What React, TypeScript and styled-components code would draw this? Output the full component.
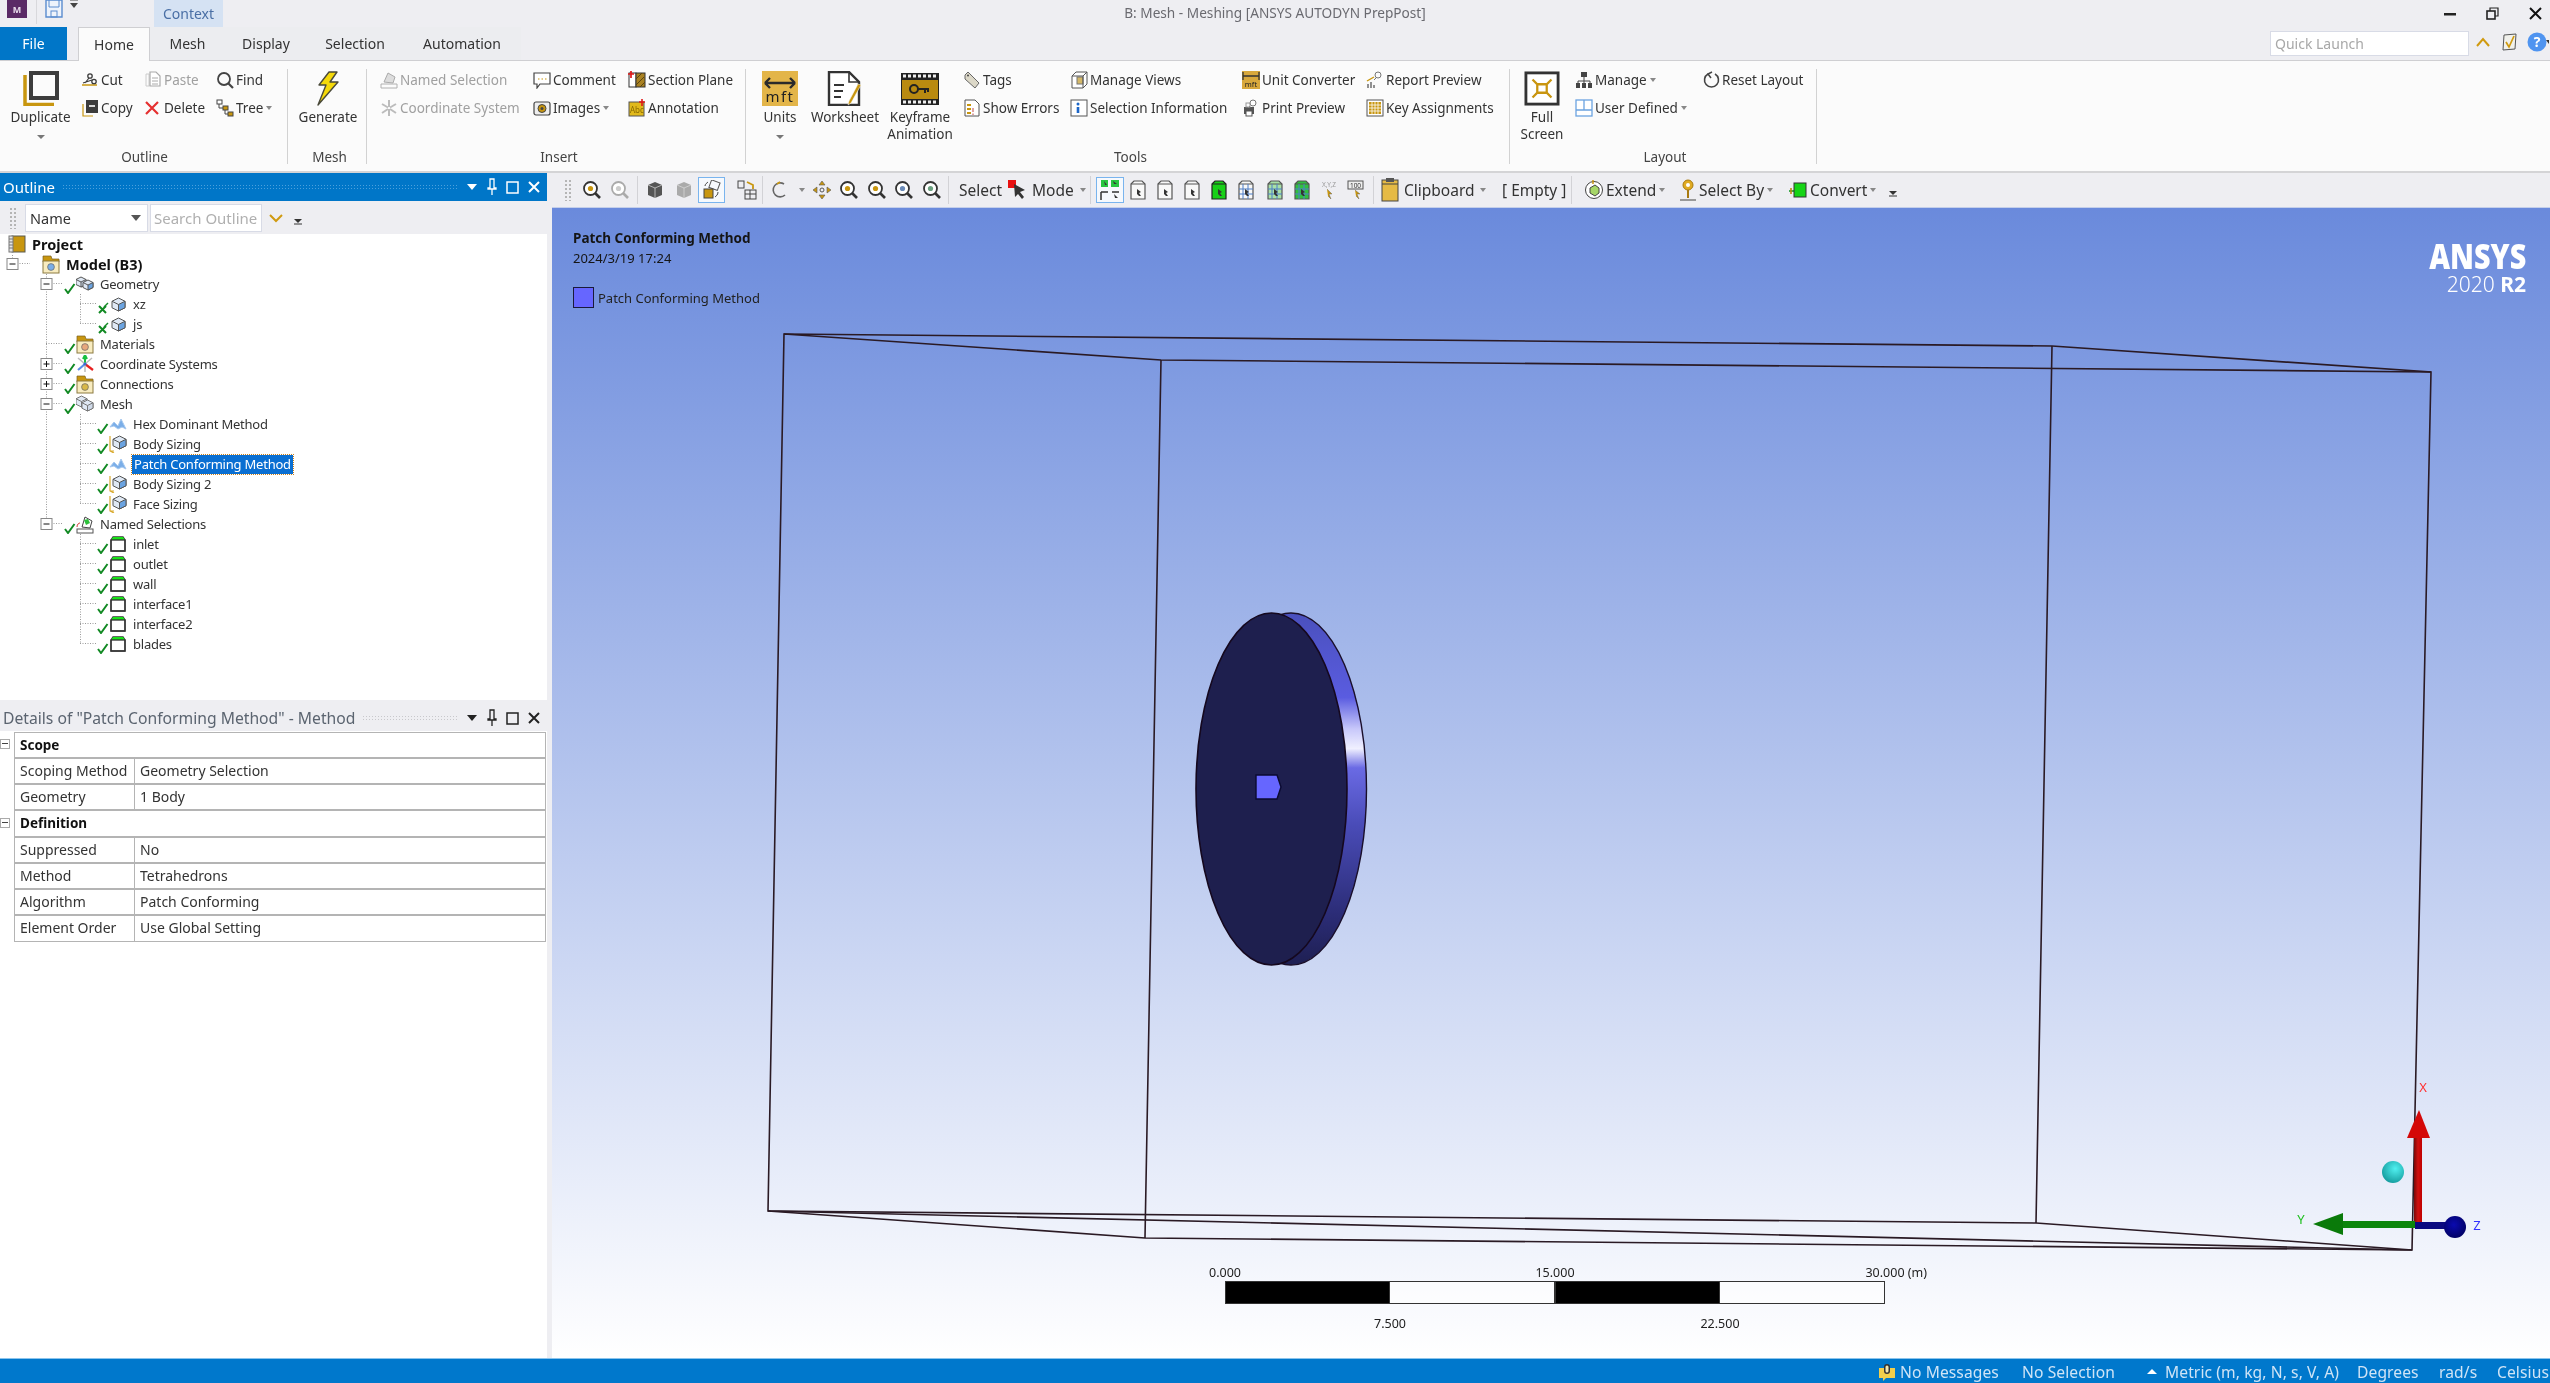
import React from "react";
import styled, { createGlobalStyle } from "styled-components";

const Global = createGlobalStyle`
  html, body { margin: 0; padding: 0; background: #eeeef2; }
  * { box-sizing: border-box; }
`;
const FONT = `"Noto Sans", "Open Sans", sans-serif`;
const GOLD = "#c8960f";
const DARK = "#3c3c3c";
const BLUE = "#6ba3e0";

const Page = styled.div`
  width: 2550px; height: 1383px; overflow: hidden; display: flex; flex-direction: column;
  font-family: ${FONT}; font-size: 13.5px; color: #333; background: #eeeef2; filter: blur(0.45px);
`;
const TitleBar = styled.div`height: 27px; display: grid; grid-template-columns: 1fr auto 1fr; align-items: start;`;
const QuickAccess = styled.div`display: flex; align-items: flex-start; height: 27px; padding-left: 7px;`;
const AppLogo = styled.div`
  width: 20px; height: 18px; background: #5a2a66; color: #e8dcec; font-size: 9px; font-weight: 700;
  display: flex; align-items: center; justify-content: center;
`;
const QuickSep = styled.div`width: 1px; height: 24px; background: #d8d8dc; margin: 0 8px 0 9px;`;
const QuickGap = styled.span`width: 6px; flex: none;`;
const ContextTab = styled.div`
  width: 69px; height: 27px; margin-left: 75px; background: #d5e2f3; color: #4a6fa5; font-size: 14px;
  display: flex; align-items: center; justify-content: center;
`;
const WindowTitle = styled.div`font-size: 13.65px; color: #6a6a70; line-height: 25px;`;
const WindowControls = styled.div`display: flex; justify-content: flex-end; align-items: center; height: 27px; gap: 30px; padding-right: 8px;`;

const TabRow = styled.div`height: 33px; display: flex; align-items: stretch; padding-right: 0;`;
const FileTab = styled.div`
  width: 67px; background: #0076c8; color: #fff; font-size: 14px; display: flex; align-items: center; justify-content: center; margin-right: 11px;
`;
const Tab = styled.div<{ $w: number; $active?: boolean }>`
  width: ${p => p.$w}px; display: flex; align-items: center; justify-content: center; font-size: 14px; color: #333;
  background: ${p => (p.$active ? "#fbfbfb" : "#ecedf0")};
  border: ${p => (p.$active ? "1px solid #cfcfd2" : "none")}; border-bottom: none; margin-bottom: ${p => (p.$active ? "-1px" : "0")};
  position: relative; z-index: 1;
`;
const TabSpacer = styled.div`flex: 1;`;
const QuickLaunch = styled.div`
  width: 199px; height: 25px; margin-top: 4px; background: #fff; border: 1px solid #d8dbe6; color: #a8a8a8; font-size: 14px;
  padding-left: 4px; line-height: 23px; margin-right: 6px;
`;
const HelpGroup = styled.div`display: flex; align-items: center; gap: 9px; width: 75px; height: 29px;`;

const Ribbon = styled.div`
  height: 113px; display: flex; padding: 8px 0 7px; background: #fbfbfb;
  border-top: 1px solid #cfcfd2; border-bottom: 2px solid #d4d4d6;
`;
const Group = styled.div<{ $w: number; $pad?: number }>`
  width: ${p => p.$w}px; display: flex; flex-direction: column; flex: none;
  border-right: 1px solid #d2d2d2;
  padding-left: ${p => p.$pad ?? 0}px;
`;
const GroupBody = styled.div`height: 81px; display: flex; align-items: flex-start;`;
const GroupLabel = styled.div<{ $shift?: number }>`
  line-height: 14px; text-align: center; color: #444; font-size: 13.5px; margin-left: ${p => p.$shift ?? 0}px;
`;
const BigBtn = styled.div<{ $w: number }>`
  width: ${p => p.$w}px; flex: none; display: flex; flex-direction: column; align-items: center; padding-top: 2px;
  line-height: 17px; text-align: center; font-size: 13.5px;
  svg { margin-bottom: 3px; }
`;
const DropCaret = styled.span`
  display: inline-block; width: 0; height: 0; border-left: 4px solid transparent; border-right: 4px solid transparent;
  border-top: 4px solid #777; margin-top: 9px;
`;
const InlineCaret = styled.span`
  display: inline-block; width: 0; height: 0; border-left: 3.5px solid transparent; border-right: 3.5px solid transparent;
  border-top: 4px solid #888; margin-left: 3px; vertical-align: 3px;
`;
const BodyGap = styled.span<{ $w: number }>`width: ${p => p.$w}px; flex: none;`;
const SmallCol = styled.div<{ $w?: number }>`
  width: ${p => (p.$w ? p.$w + "px" : "auto")}; flex: none; display: flex; flex-direction: column; gap: 6px;
`;
const SmallBtn = styled.div<{ $off?: boolean }>`
  height: 22px; display: flex; align-items: center; white-space: nowrap; font-size: 13.5px;
  color: ${p => (p.$off ? "#a0a0a0" : "#333")};
`;
const SmallIcon = styled.span`width: 20px; flex: none; display: flex; align-items: center;`;

const Main = styled.div`flex: 1; display: flex; min-height: 0;`;
const LeftPane = styled.div`width: 547px; flex: none; display: flex; flex-direction: column; background: #fff;`;
const Splitter = styled.div`width: 5px; flex: none; background: #eeeef2;`;
const RightPane = styled.div`flex: 1; display: flex; flex-direction: column; min-width: 0;`;

const PanelHead = styled.div<{ $active?: boolean }>`
  height: ${p => (p.$active ? "28px" : "26px")}; display: flex; align-items: center; padding: 0 7px 0 3px; flex: none;
  font-size: ${p => (p.$active ? "15px" : "15.7px")};
  background: ${p => (p.$active ? "#0076c8" : "#eeeef2")}; color: ${p => (p.$active ? "#fff" : "#5b6470")};
`;
const HeadDots = styled.div<{ $active?: boolean }>`
  flex: 1; height: 7px; margin: 0 8px 0 7px;
  background-image: radial-gradient(${p => (p.$active ? "#4ba0dc" : "#c8c8cc")} 0.8px, transparent 1px);
  background-size: 3px 3px;
`;
const HeadIcons = styled.div`display: flex; align-items: center; gap: 9px;`;
const OutlineTools = styled.div`
  height: 33px; flex: none; display: flex; align-items: center; background: #eeeef2; padding-left: 9px;
`;
const Grip = styled.div`
  width: 7px; height: 22px; flex: none;
  background-image: radial-gradient(#b5b5b5 0.9px, transparent 1.1px); background-size: 4px 4px;
`;
const NameSelect = styled.div`
  width: 123px; height: 28px; margin-left: 9px; background: #fff; border: 1px solid #d8dbe6; font-size: 14.5px; color: #333;
  display: flex; align-items: center; justify-content: space-between; padding: 0 5px 0 4px;
`;
const SearchBox = styled.div`
  width: 112px; height: 28px; margin: 0 6px 0 2px; background: #fff; border: 1px solid #d8dbe6; color: #b0b0b0; font-size: 15px;
  padding-left: 3px; line-height: 26px; white-space: nowrap; overflow: hidden;
`;
const ToolsGap = styled.span`width: 9px; flex: none;`;
const DropLow = styled.span`display: block; margin-top: 8px;`;
const Tree = styled.div`height: 466px; flex: none; position: relative; background: #fff; overflow: hidden;`;
const TreeLines = styled.svg`position: absolute; left: 0; top: 0;`;
const Row = styled.div<{ $pad: number }>`
  height: 20px; display: flex; align-items: center; padding-left: ${p => p.$pad}px; position: relative; white-space: nowrap;
`;
const CheckSlot = styled.span`width: 12px; height: 20px; flex: none; display: flex; align-items: flex-end;`;
const NodeIcon = styled.span`width: 18px; height: 20px; flex: none; display: flex; align-items: center; justify-content: center; margin-right: 6px;`;
const NodeLabel = styled.span<{ $bold?: boolean; $sel?: boolean }>`
  font-size: ${p => (p.$bold ? "14.5px" : "13px")}; line-height: 19px; font-weight: ${p => (p.$bold ? 700 : 400)};
  letter-spacing: ${p => (p.$bold ? "0" : "-0.22px")};
  color: ${p => (p.$bold ? "#111" : p.$sel ? "#fff" : "#333")};
  padding: 0 ${p => (p.$sel ? "2px" : "0")};
  margin-left: ${p => (p.$sel ? "-1px" : "0")};
  background: ${p => (p.$sel ? "#0a6fd2" : "transparent")};
  outline: ${p => (p.$sel ? "1px dotted #c8801c" : "none")};
`;
const TreeGap = styled.div`height: 5px; flex: none; background: #eeeef2;`;
const Details = styled.div`flex: 1; background: #fff; display: flex; flex-direction: column;`;
const Grid = styled.div`margin: 0 1px 0 0; padding-left: 0; position: relative;`;
const DetRow = styled.div`height: 26.25px; display: flex; align-items: center;`;
const DetGutter = styled.div`width: 15px; flex: none; display: flex; align-items: center;`;
const Minus = styled.span`
  width: 10px; height: 10px; border: 1px solid #aaa; background: #fff; display: block; position: relative;
  &::after { content: ""; position: absolute; left: 1px; right: 1px; top: 3px; height: 1px; background: #444; }
`;
const DetCell = styled.div<{ $w?: number; $bold?: boolean }>`
  ${p => (p.$w ? `width: ${p.$w}px; flex: none;` : "flex: 1;")}
  height: 100%; border: 1px solid #b4b4b4; margin-left: -1px; margin-bottom: -1px; padding-left: 5px; line-height: 24px;
  font-size: ${p => (p.$bold ? "13.5px" : "14px")}; color: #333; font-weight: ${p => (p.$bold ? 700 : 400)}; background: #fff;
  ${p => (p.$bold ? "color:#111;" : "")}
  &:first-of-type { margin-left: 0; }
`;

const ToolBar = styled.div`
  height: 34px; flex: none; display: flex; align-items: center; background: #eeeef2; padding-left: 12px;
  border-top: 0; font-size: 15.5px; color: #333;
`;
const Slot = styled.div<{ $w: number; $on?: boolean; $end?: boolean }>`
  width: ${p => p.$w}px; flex: none; height: 26px; display: flex; align-items: center;
  justify-content: ${p => (p.$end ? "flex-end" : "center")};
  ${p => (p.$on ? "border: 1px solid #79b4ee; background: #f6f9fd;" : "")}
`;
const TextSlot = styled.div<{ $w: number; $pad?: number }>`
  width: ${p => p.$w}px; flex: none; padding-left: ${p => p.$pad ?? 0}px; white-space: nowrap; line-height: 26px;
`;
const ToolSep = styled.div<{ $w: number }>`
  width: ${p => p.$w}px; flex: none; height: 28px; display: flex; justify-content: center;
  &::after { content: ""; width: 1px; height: 100%; background: #d2d2d6; }
`;
const BarCaret = styled.span`
  width: 0; height: 0; border-left: 3.5px solid transparent; border-right: 3.5px solid transparent; border-top: 4px solid #888;
`;
const Viewport = styled.div`
  flex: 1; position: relative; overflow: hidden; border-top: 1px solid #c4cfea;
  background: linear-gradient(180deg, #6a8adc 0%, #ffffff 100%);
`;
const Scene = styled.svg`position: absolute; left: 0; top: 0;`;
const Caption = styled.div`
  position: absolute; left: 21px; top: 20px; color: #151515; font-size: 13px; line-height: 20px;
`;
const CaptionTitle = styled.div`font-weight: 700; font-size: 13.5px;`;
const Legend = styled.div`display: flex; align-items: center; gap: 4px; margin-top: 19px; height: 21px; color: #222;`;
const Swatch = styled.span`width: 21px; height: 21px; background: #6666ff; border: 1px solid #1a1a3a;`;
const Brand = styled.div`
  position: absolute; right: 24px; top: 33px; color: #fff; display: flex; flex-direction: column; align-items: flex-end;
`;
const BrandName = styled.div`
  font-family: "Open Sans", sans-serif; font-weight: 800; font-size: 35px; line-height: 30px; transform: scaleX(0.82); transform-origin: right center;
`;
const BrandVer = styled.div`font-size: 21px; line-height: 20px; margin-top: 3px; font-weight: 300; b { font-weight: 700; }`;
const ScaleBar = styled.div`
  position: absolute; left: 673px; top: 1058px; width: 660px; display: grid; grid-template-columns: repeat(4, 165px);
  font-size: 12.5px; color: #222; line-height: 14px;
`;
const ScaleTick = styled.span<{ $col: number; $end?: boolean }>`
  grid-column: ${p => p.$col}; white-space: nowrap;
  ${p => (p.$end ? "justify-self: end; transform: translateX(42px);" : "justify-self: start; transform: translateX(-50%);")}
  height: 15px;
`;
const ScaleSeg = styled.div<{ $dark?: boolean }>`
  height: 23px; background: ${p => (p.$dark ? "#000" : "rgba(255,255,255,.6)")}; border: 1px solid #333; border-left: ${p => (p.$dark ? "1px solid #333" : "none")};
`;
const ScaleGap = styled.div`grid-column: 1 / -1; height: 13px;`;
const StatusBar = styled.div`
  height: 25px; flex: none; display: flex; justify-content: flex-end; background: #0078cc; border-top: 1px solid #8cc4ec;
  color: #cfe4f6; font-size: 15.6px; letter-spacing: 0.1px;
`;
const StatusItem = styled.div<{ $w: number }>`
  width: ${p => p.$w}px; flex: none; display: flex; align-items: center; gap: 3px; white-space: nowrap; padding-top: 2px;
`;
const UpCaret = styled.span`
  width: 0; height: 0; border-left: 5px solid transparent; border-right: 5px solid transparent; border-bottom: 5px solid #fff; margin-right: 5px; margin-bottom: 2px;
`;

/* ---------- icons ---------- */
const Ic: React.FC<{ w: number; h?: number; children: React.ReactNode; vb?: string }> = ({ w, h, children, vb }) => (
  <svg width={w} height={h ?? w} viewBox={vb ?? `0 0 ${w} ${h ?? w}`} fill="none" style={{ display: "block", flex: "none" }}>{children}</svg>
);
const cube = (x: number, y: number, s: number, fill = BLUE, line = "#555") => (
  <g stroke={line} strokeWidth="1">
    <path d={`M${x} ${y + s * 0.25}L${x + s * 0.5} ${y}L${x + s} ${y + s * 0.25}L${x + s} ${y + s * 0.75}L${x + s * 0.5} ${y + s}L${x} ${y + s * 0.75}Z`} fill="#dfe8f4" />
    <path d={`M${x + s * 0.5} ${y + s * 0.5}L${x + s} ${y + s * 0.25}L${x + s} ${y + s * 0.75}L${x + s * 0.5} ${y + s}Z`} fill={fill} />
    <path d={`M${x} ${y + s * 0.25}L${x + s * 0.5} ${y + s * 0.5}`} />
  </g>
);
const Duplicate = () => (
  <Ic w={36} h={35}>
    <path d="M2 4V33.5H31" stroke={GOLD} strokeWidth="3.5" />
    <rect x="8" y="2" width="26" height="25" stroke={DARK} strokeWidth="4" />
  </Ic>
);
const Cut = () => (
  <Ic w={18}><path d="M1 14H16" stroke={GOLD} strokeWidth="1.5" /><circle cx="9" cy="5" r="2.2" stroke={DARK} strokeWidth="1.3" /><circle cx="13" cy="10.5" r="2.2" stroke={DARK} strokeWidth="1.3" /><path d="M2 12L11 9M8 7L4 12" stroke={DARK} strokeWidth="1.2" /></Ic>
);
const Copy = () => (
  <Ic w={18}><path d="M2 5V17H12" stroke={GOLD} strokeWidth="1.2" /><rect x="5" y="1" width="12" height="13" fill={DARK} /><path d="M8 7H14" stroke="#fff" strokeWidth="1.6" /></Ic>
);
const Paste = () => (
  <Ic w={18}><path d="M2 3H5V15H2Z" stroke="#ccc" /><path d="M6 1H12L16 5V15H6Z" fill="#fff" stroke="#aaa" strokeWidth="1.2" /><path d="M8 7H14M8 10H14M8 13H14" stroke="#aaa" /></Ic>
);
const Find = () => (
  <Ic w={18}><circle cx="8" cy="8" r="6" stroke="#444" strokeWidth="1.8" /><path d="M12 12L17 17" stroke="#444" strokeWidth="2.2" /></Ic>
);
const Del = () => (<Ic w={16}><path d="M2 2L14 14M14 2L2 14" stroke="#e53030" strokeWidth="2.2" /></Ic>);
const TreeI = () => (
  <Ic w={18}><rect x="1" y="1" width="5" height="4" stroke="#444" fill="#fff" /><rect x="7" y="7" width="5" height="4" fill={GOLD} stroke="#444" /><rect x="12" y="13" width="5" height="4" fill={GOLD} stroke="#444" /><path d="M3 5V9H7M9 11V15H12" stroke="#444" /></Ic>
);
const Bolt = () => (
  <Ic w={26} h={35}><path d="M14 1L4 14H11L3 34L23 11H15L22 1Z" fill="#f5d90a" stroke="#4a4a3a" strokeWidth="1.4" strokeLinejoin="round" /></Ic>
);
const NamedOff = () => (
  <Ic w={18}><path d="M1 13H17V17H1Z" stroke="#b0b0b0" /><path d="M4 11L8 2L15 6L13 12Z" fill="#ddd" stroke="#aaa" /></Ic>
);
const CoordOff = () => (
  <Ic w={18}><path d="M9 1V8M9 10V17M2 5L8 8.5M16 5L10 8.5M2 14L8 10M16 14L10 10" stroke="#bcbcbc" strokeWidth="2" /></Ic>
);
const Comment = () => (
  <Ic w={18}><path d="M1 2H17V13H7L4 17V13H1Z" stroke="#444" strokeWidth="1.2" fill="#fff" /><path d="M5 8H6.5M8.5 8H10M12 8H13.5" stroke={GOLD} strokeWidth="1.2" /></Ic>
);
const Camera = () => (
  <Ic w={18}><rect x="1" y="3" width="16" height="13" rx="2" fill="#eee" stroke="#444" strokeWidth="1.2" /><circle cx="9" cy="9.5" r="4" fill={GOLD} stroke="#444" /><circle cx="9" cy="9.5" r="1.5" fill="#444" /></Ic>
);
const Section = () => (
  <Ic w={18}><rect x="1" y="2" width="7" height="14" stroke="#333" fill="#fff" /><rect x="8" y="2" width="9" height="14" fill="#a98121" stroke="#333" /><path d="M8 8L14 2M8 14L16 6M12 16L17 11" stroke="#5b4510" /><path d="M3 0V7M0 3H6" stroke="#e01818" strokeWidth="1.7" /></Ic>
);
const Annot = () => (
  <Ic w={18}><rect x="1" y="3" width="15" height="14" fill="#e1b91a" stroke="#555" /><text x="2" y="14" fontSize="8" fill="#8a6a00" fontFamily="Noto Sans">Abc</text><path d="M14 0V7M11 3H17" stroke="#e01818" strokeWidth="1.6" /></Ic>
);
const Units = () => (
  <Ic w={36} h={35}><rect width="36" height="35" fill="#e3b549" /><path d="M3 12H33M3 12L8 7M3 12L8 17M33 12L28 7M33 12L28 17" stroke="#2a2a2a" strokeWidth="2.4" /><text x="18" y="31" textAnchor="middle" fontSize="15" fill="#222" letterSpacing="1.5" fontFamily="Noto Sans">mft</text></Ic>
);
const Worksheet = () => (
  <Ic w={36} h={35}><path d="M2 1H22L32 11V34H2Z" fill="#fff" stroke="#333" strokeWidth="2.4" /><path d="M22 1V11H32" stroke="#333" strokeWidth="1.6" /><path d="M7 14H17M7 20H16M7 26H14" stroke="#333" strokeWidth="2" /><path d="M34 14L24 32L21 34L22 30L31 13Z" fill={GOLD} stroke="#fff" strokeWidth=".5" /></Ic>
);
const Film = () => (
  <Ic w={38} h={35}><rect y="2" width="38" height="32" fill="#222" /><rect x="1" y="9" width="36" height="19" fill="#b98a10" /><path d="M2 5H36M2 31H36" stroke="#eee" strokeWidth="3" strokeDasharray="3 2" /><circle cx="13" cy="18" r="4" stroke="#222" strokeWidth="2" /><path d="M17 18H28M24 18V22M27 18V21" stroke="#222" strokeWidth="2" /></Ic>
);
const Tag = () => (<Ic w={18}><path d="M2 4L5 1L16 12L12 17L2 8Z" fill="#dcd8c8" stroke="#666" /><circle cx="5" cy="4.5" r="1" fill="#444" /></Ic>);
const Errors = () => (
  <Ic w={18}><path d="M2 1H12L16 5V17H2Z" fill="#fff" stroke="#555" /><path d="M4 6H8M4 10H8M4 14H8" stroke={GOLD} strokeWidth="1.8" /><path d="M10 9V13M10 14.5V16" stroke="#c66" strokeWidth="1.2" /></Ic>
);
const Views = () => (
  <Ic w={18}><path d="M2 5L6 1H17V13L13 17H2Z" fill="#fff" stroke="#555" /><rect x="7" y="6" width="6" height="7" fill="#d4b869" stroke="#777" /><path d="M2 5H13V17M13 5L17 1" stroke="#555" /></Ic>
);
const InfoI = () => (
  <Ic w={18}><rect x="1" y="1" width="16" height="16" fill="#fff" stroke="#555" /><circle cx="8" cy="5" r="1.5" fill="#1c66c8" /><path d="M8 8V14" stroke="#1c66c8" strokeWidth="2.6" /></Ic>
);
const Conv = () => (
  <Ic w={18}><rect width="18" height="18" fill="#d8a83c" /><path d="M1 5H17M1 1V9M17 1V9" stroke="#333" strokeWidth="1.3" /><text x="9" y="16" textAnchor="middle" fontSize="7.5" fontFamily="Noto Sans" fill="#222">mft</text></Ic>
);
const PrintPrev = () => (
  <Ic w={18}><rect x="2" y="8" width="10" height="7" fill="#555" /><rect x="4" y="12" width="6" height="5" fill="#fff" stroke="#555" /><circle cx="11" cy="4" r="3" stroke="#777" fill="#fff" /><path d="M8 7L6 9" stroke="#777" /><rect x="4" y="4" width="4" height="4" stroke="#999" /></Ic>
);
const ReportPrev = () => (
  <Ic w={18}><path d="M2 17V13M5 17V11M8 17V14" stroke="#777" strokeWidth="1.6" /><path d="M1 10L8 6" stroke={GOLD} strokeWidth="1.4" /><circle cx="12" cy="4" r="3" stroke="#777" /><path d="M10 7L8 9" stroke="#777" /></Ic>
);
const KeyA = () => (
  <Ic w={18}><rect x="1" y="1" width="16" height="16" fill="#fff" stroke="#555" /><rect x="3" y="3" width="12" height="12" fill={GOLD} /><path d="M3 6H15M3 9H15M3 12H15M6 3V15M9 3V15M12 3V15" stroke="#fff" strokeWidth=".8" /></Ic>
);
const FullScr = () => (
  <Ic w={38} h={35} vb="0 0 38 37"><rect x="2" y="2" width="34" height="33" stroke="#333" strokeWidth="3" fill="#fff" /><path d="M9 9L14 14H24L29 9M9 28L14 23H24L29 28M14 14V23M24 14V23" stroke="#c9950f" strokeWidth="2.4" /></Ic>
);
const Org = () => (
  <Ic w={18}><rect x="6" y="1" width="6" height="5" fill="#444" /><rect x="1" y="12" width="4" height="5" fill="#444" /><rect x="7" y="12" width="4" height="5" fill="#444" /><rect x="13" y="12" width="4" height="5" fill="#444" /><path d="M9 6V10M3 12V10H15V12M9 10V12" stroke="#444" /></Ic>
);
const UserDef = () => (
  <Ic w={18}><rect x="1" y="1" width="16" height="16" stroke={BLUE} strokeWidth="1.3" fill="#fff" /><path d="M1 11H17M9 1V11" stroke={BLUE} strokeWidth="1.3" /></Ic>
);
const Reset = () => (
  <Ic w={18}><path d="M6 3A7 7 0 1 0 13 3" stroke="#444" strokeWidth="1.6" /><path d="M10 1L6 3L9 7" stroke="#444" strokeWidth="1.5" /></Ic>
);
const Min = () => <Ic w={12} h={4}><rect width="12" height="2.5" fill="#222" y="1" /></Ic>;
const Restore = () => <Ic w={13}><rect x="1" y="4" width="8" height="8" stroke="#222" strokeWidth="1.6" /><path d="M4 4V1H12V9H9" stroke="#222" strokeWidth="1.2" /></Ic>;
const CloseW = () => <Ic w={13}><path d="M1 1L12 12M12 1L1 12" stroke="#111" strokeWidth="2" /></Ic>;
const SaveI = () => (
  <Ic w={18}><path d="M1 0H17V17H1Z" stroke="#5a8ccf" strokeWidth="1.4" fill="#eef3fb" /><path d="M4 0V7H14V0" stroke="#5a8ccf" /><rect x="6" y="11" width="6" height="6" stroke="#5a8ccf" /></Ic>
);
const QaArrow = () => <Ic w={10} h={11}><path d="M1 0H9" stroke="#444" /><path d="M1 3H9L5 8Z" fill="#444" /></Ic>;
const ChevUp = () => <Ic w={16} h={10}><path d="M2 9L8 2L14 9" stroke="#d09a10" strokeWidth="2" /></Ic>;
const ChevDown = () => <Ic w={16} h={10}><path d="M2 2L8 8L14 2" stroke="#d09a10" strokeWidth="2" /></Ic>;
const CheckBox = () => <Ic w={18}><path d="M4 2L16 1L15 16L3 17Z" fill="#f1f1ec" stroke="#555" /><path d="M6 9L9 14L14 3" stroke="#d09a10" strokeWidth="1.7" /></Ic>;
const Help = () => (
  <Ic w={22} h={22}>
    <circle cx="10" cy="11" r="9.5" fill="#4f94f0" /><text x="10" y="16" textAnchor="middle" fontSize="14" fontWeight="700" fill="#fff" fontFamily="Noto Sans">?</text>
    <path d="M19 9H22V13Z" fill="#333" />
  </Ic>
);
const HArrow = ({ c = "#fff" }: { c?: string }) => <Ic w={12} h={8}><path d="M1 1H11L6 7Z" fill={c} /></Ic>;
const Pin = ({ c = "#fff" }: { c?: string }) => <Ic w={10} h={18}><path d="M3 1H7V10H9V11H1V10H3ZM5 11V17" stroke={c} strokeWidth="1.3" /></Ic>;
const Max = ({ c = "#fff" }: { c?: string }) => <Ic w={13}><rect x="1" y="1" width="11" height="11" stroke={c} strokeWidth="1.5" /></Ic>;
const XI = ({ c = "#fff" }: { c?: string }) => <Ic w={12}><path d="M1 1L11 11M11 1L1 11" stroke={c} strokeWidth="2" /></Ic>;

/* tree icons */
const Check = () => <Ic w={12} h={13}><path d="M1 8L4 12L10.5 3" stroke="#128a24" strokeWidth="2" /></Ic>;
const CheckX = () => <Ic w={12} h={13}><path d="M2 5L9 12M9 5L2 12" stroke="#128a24" strokeWidth="2" /><path d="M7 6L11 2" stroke="#128a24" strokeWidth="1.4" /></Ic>;
const ProjectI = () => (
  <Ic w={18} h={18}><rect x="4" y="1" width="13" height="16" fill="#c8960f" stroke="#5a5a50" /><rect x="1" y="1" width="4" height="16" fill="#e4e4e4" stroke="#777" /><path d="M1 4H5M1 7H5M1 10H5M1 13H5" stroke="#777" /></Ic>
);
const Folder = ({ inner }: { inner: string }) => (
  <Ic w={18} h={19}><path d="M1 1H9L10 4H17V7H1Z" fill="#c8960f" stroke="#7a6020" strokeWidth=".7" /><rect x="1" y="6" width="16" height="12" fill="#f8ecc0" stroke="#8c7a40" /><circle cx="9" cy="12" r="3.4" fill={inner} stroke="#666" strokeWidth=".7" /></Ic>
);
const Cubes = ({ c = BLUE }: { c?: string }) => (
  <Ic w={18}>{cube(0, 2, 10, "#cfdcec")}{cube(7, 5, 10, c)}</Ic>
);
const MeshI = () => (
  <Ic w={18} h={18}>{cube(0, 1, 11, "#dde4ee", "#777")}{cube(6, 5, 11, "#cfd9e8", "#777")}</Ic>
);
const CubeI = () => <Ic w={15}>{cube(1, 1, 13)}</Ic>;
const CoordI = () => (
  <Ic w={18}><path d="M9 9V1M7 4L9 0L11 4" stroke="#18c040" strokeWidth="2" /><path d="M9 9L17 15" stroke="#e82020" strokeWidth="2.2" /><path d="M9 9L2 15" stroke="#5a8ce8" strokeWidth="2.2" /><path d="M9 9L2 3M9 9L16 3M9 9V17" stroke="#bbb" strokeWidth="1.5" /><circle cx="9" cy="9" r="1.6" fill="#3a6ad0" /></Ic>
);
const HexI = () => (
  <Ic w={18} h={14}><path d="M1 10L5 5L9 9L12 2L17 12L13 10L9 12L5 9Z" fill="#7aaee8" stroke="#a6c8ef" /></Ic>
);
const Sizing = () => (
  <Ic w={18}><path d="M1 1V16L5 18M1 16H5" stroke="#d8a82a" strokeWidth="1.2" /><g>{cube(4, 1, 13)}</g></Ic>
);
const NamedI = () => (
  <Ic w={18} h={19}><rect x="1" y="14" width="16" height="4" fill="#fff" stroke="#555" /><path d="M6 12L9 2L16 6L14 13Z" fill="#fff" stroke="#444" /><path d="M8 5L12 4L14 8L10 10Z" fill="#2bc03a" /><path d="M1 12C1 9 3 8 4 8" stroke="#d83a3a" /></Ic>
);
const GreenBox = () => (
  <Ic w={16}><path d="M1 4L3 1H13L15 4V15H1Z" fill="#fff" stroke="#333" strokeWidth="1.3" /><path d="M1 4L3 1H13L15 4Z" fill="#18e018" /><rect x="1" y="4" width="14" height="11" stroke="#333" strokeWidth="1.3" /></Ic>
);

/* toolbar icons */
const ZoomI = ({ c = "#333", f = GOLD }: { c?: string; f?: string }) => (
  <Ic w={20}><circle cx="8.5" cy="8.5" r="6.5" stroke={c} strokeWidth="1.8" fill="#fff" /><path d="M13 13L18 18" stroke={c} strokeWidth="2.6" /><circle cx="8.5" cy="8.5" r="2.6" fill={f} /></Ic>
);
const DarkCube = ({ c = "#555" }: { c?: string }) => (
  <Ic w={18}><path d="M9 1L16 4V14L9 17L2 14V4Z" fill={c} /><path d="M2 4L9 7L16 4M9 7V17" stroke="#ddd" strokeWidth=".7" /></Ic>
);
const Rotate3d = () => (
  <Ic w={20}><rect x="8" y="1" width="9" height="8" stroke="#555" transform="rotate(20 12 5)" /><rect x="2" y="9" width="9" height="9" fill={GOLD} stroke="#444" /><path d="M3 6C3 4 5 3 6 2M16 12C16 15 14 16 13 17" stroke="#444" /></Ic>
);
const Pane = () => (
  <Ic w={20}><rect x="1" y="1" width="6" height="7" stroke="#444" /><rect x="8" y="10" width="11" height="9" stroke="#444" /><path d="M13 10V19M8 14H19" stroke="#444" /><path d="M10 2L16 5V9" stroke={GOLD} strokeWidth="1.8" /></Ic>
);
const RotateI = () => <Ic w={18}><path d="M13 3A7 7 0 1 0 14 14" stroke="#666" strokeWidth="1.6" /><path d="M6 3L9 1" stroke={GOLD} strokeWidth="1.6" /></Ic>;
const PanI = () => <Ic w={20}><path d="M10 1L13 5H7ZM10 19L13 15H7ZM1 10L5 7V13ZM19 10L15 7V13Z" fill={GOLD} stroke="#555" strokeWidth=".6" /><circle cx="10" cy="10" r="2" stroke="#555" /></Ic>;
const ModeI = () => <Ic w={20}><rect width="8" height="8" fill="#e81010" /><path d="M6 4L17 10L12 12L16 17L14 19L10 14L7 17Z" fill="#333" /></Ic>;
const BoxSel = ({ f = "#fff", mesh, c = "#555" }: { f?: string; mesh?: boolean; c?: string }) => (
  <Ic w={18} h={20}>
    <path d="M2 4L5 1H13L16 4V19H2Z" fill={f === "#fff" ? "#f8f8f8" : f} stroke={c} strokeWidth="1.2" />
    <path d="M2 4H16" stroke={c} />
    {mesh && <path d="M6 4V19M11 4V19M2 9H16M2 14H16" stroke="#4f7ec8" strokeWidth="1" />}
    <path d="M8 9L12 12L10 13L12 16L10 16L8 14Z" fill="#333" />
  </Ic>
);
const VertexSel = () => (
  <Ic w={22} h={24}><rect x="2" y="2" width="7" height="7" fill="#26c640" /><rect x="12" y="2" width="8" height="7" fill="#26c640" /><path d="M2 14H9M2 14V22M13 14H20" stroke="#333" strokeWidth="1.5" /><path d="M5 3L8 7L6 7ZM14 3L18 6H15Z" fill="#333" /><path d="M15 16L19 20H16Z" fill="#333" /></Ic>
);
const XYZ = () => <Ic w={20}><text x="10" y="7" textAnchor="middle" fontSize="6.5" fill="#9a9a9a" fontFamily="Noto Sans">X,Y,Z</text><path d="M8 9L13 14L10 14L12 19L9 16" fill={GOLD} stroke="#555" strokeWidth=".4" /></Ic>;
const HundredI = () => <Ic w={20}><rect x="2" y="1" width="15" height="8" fill="#eee" stroke="#555" /><text x="9.5" y="8" textAnchor="middle" fontSize="6.5" fill="#333" fontFamily="Noto Sans">100</text><path d="M9 10L14 14L11 14L13 19L10 16" fill={GOLD} stroke="#555" strokeWidth=".4" /></Ic>;
const Clip = () => <Ic w={18} h={24}><rect x="1" y="2" width="16" height="21" fill="#e5ba45" stroke="#444" /><rect x="5" y="0" width="8" height="4" fill="#555" /><path d="M1 6H17" stroke="#444" /></Ic>;
const ExtendI = () => <Ic w={20}><circle cx="10" cy="10" r="8.5" stroke="#444" fill="#fff" /><path d="M6 8L11 5L15 8V13L11 16L6 13Z" fill="#a6d668" stroke="#444" /><path d="M9 0V4" stroke={GOLD} strokeWidth="1.5" /></Ic>;
const SelectBy = () => <Ic w={18} h={24}><circle cx="9" cy="7" r="5" fill="#e0ab22" stroke="#a87a10" /><circle cx="9" cy="7" r="2" fill="#fff" /><path d="M9 12V20" stroke="#a87a10" strokeWidth="2" /><path d="M1 22H17" stroke="#999" strokeWidth="2" /></Ic>;
const ConvertI = () => <Ic w={20}><path d="M1 11H6" stroke="#1a9a2a" strokeWidth="1.6" /><rect x="6" y="3" width="12" height="14" fill="#16d416" stroke="#333" /><path d="M3 8V14" stroke="#c08a10" strokeWidth="1.6" /></Ic>;
const SmallDrop = () => <Ic w={10} h={8}><path d="M1 6H9" stroke="#333" /><path d="M1 1H9L5 5Z" fill="#333" /></Ic>;
const Msg = () => <Ic w={19} h={19}><path d="M1 5H17V15H8L5 18V15H1Z" fill="#f2cf4c" /><rect x="6" y="1" width="6" height="10" rx="3" fill="#333" /><rect x="7.5" y="2.5" width="3" height="7" rx="1.5" fill="#f2e7b0" /></Ic>;

/* ---------- data ---------- */
type Node = { t: string; pad: number; i: React.ReactNode; bold?: boolean; sel?: boolean; check?: "ok" | "x" };
const L2 = 64, L3 = 97;
const nodes: Node[] = [
  { t: "Project", pad: 8, i: <ProjectI />, bold: true },
  { t: "Model (B3)", pad: 42, i: <Folder inner="#7aaee8" />, bold: true },
  { t: "Geometry", pad: L2, i: <Cubes />, check: "ok" },
  { t: "xz", pad: L3, i: <CubeI />, check: "x" },
  { t: "js", pad: L3, i: <CubeI />, check: "x" },
  { t: "Materials", pad: L2, i: <Folder inner="#e7a87c" />, check: "ok" },
  { t: "Coordinate Systems", pad: L2, i: <CoordI />, check: "ok" },
  { t: "Connections", pad: L2, i: <Folder inner="#d8b848" />, check: "ok" },
  { t: "Mesh", pad: L2, i: <MeshI />, check: "ok" },
  { t: "Hex Dominant Method", pad: L3, i: <HexI />, check: "ok" },
  { t: "Body Sizing", pad: L3, i: <Sizing />, check: "ok" },
  { t: "Patch Conforming Method", pad: L3, i: <HexI />, check: "ok", sel: true },
  { t: "Body Sizing 2", pad: L3, i: <Sizing />, check: "ok" },
  { t: "Face Sizing", pad: L3, i: <Sizing />, check: "ok" },
  { t: "Named Selections", pad: L2, i: <NamedI />, check: "ok" },
  { t: "inlet", pad: L3, i: <GreenBox />, check: "ok" },
  { t: "outlet", pad: L3, i: <GreenBox />, check: "ok" },
  { t: "wall", pad: L3, i: <GreenBox />, check: "ok" },
  { t: "interface1", pad: L3, i: <GreenBox />, check: "ok" },
  { t: "interface2", pad: L3, i: <GreenBox />, check: "ok" },
  { t: "blades", pad: L3, i: <GreenBox />, check: "ok" },
];
const rowY = (i: number) => 10 + i * 20;
const Exp = ({ x, i, plus }: { x: number; i: number; plus?: boolean }) => {
  const y = rowY(i);
  return (
    <g>
      <rect x={x - 5.5} y={y - 5.5} width="11" height="11" fill="#fff" stroke="#888" />
      <path d={`M${x - 3} ${y}H${x + 3}`} stroke="#111" />
      {plus && <path d={`M${x} ${y - 3}V${y + 3}`} stroke="#111" />}
    </g>
  );
};
const Connectors = () => {
  const dots = { stroke: "#9a9a9a", strokeDasharray: "1 1.5", strokeWidth: 1 };
  const v: [number, number, number][] = [[12.5, 21, 30], [46.5, 40, 290], [80.5, 60, 90], [80.5, 180, 270], [80.5, 300, 410]];
  const h: [number, number, number][] = [
    [12, 30, 1], [46, 62, 2], [46, 62, 5], [46, 62, 6], [46, 62, 7], [46, 62, 8], [46, 62, 14],
    ...[3, 4, 9, 10, 11, 12, 13, 15, 16, 17, 18, 19, 20].map(i => [80, 97, i] as [number, number, number]),
  ];
  return (
    <TreeLines width="150" height="466">
      {v.map(([x, a, b], k) => <path key={k} d={`M${x} ${a}V${b}`} {...dots} />)}
      {h.map(([a, b, i], k) => <path key={k} d={`M${a} ${rowY(i) - 0.5}H${b}`} {...dots} />)}
      <Exp x={12.5} i={1} />
      <Exp x={46.5} i={2} />
      <Exp x={46.5} i={6} plus />
      <Exp x={46.5} i={7} plus />
      <Exp x={46.5} i={8} />
      <Exp x={46.5} i={14} />
    </TreeLines>
  );
};

const W3D = () => {
  const line = { stroke: "#2a1a24", strokeWidth: 1.6, fill: "none" };
  return (
    <Scene width="1998" height="1151" viewBox="552 207 1998 1151">
      <defs>
        <linearGradient id="rim" x1="0" y1="0" x2="0" y2="1">
          <stop offset="0" stopColor="#4a50bd" />
          <stop offset=".24" stopColor="#5a5ce0" />
          <stop offset=".33" stopColor="#c8c8fa" />
          <stop offset=".385" stopColor="#f0f0ff" />
          <stop offset=".44" stopColor="#6a6ae4" />
          <stop offset=".6" stopColor="#4a4cb8" />
          <stop offset=".85" stopColor="#2c2d78" />
          <stop offset="1" stopColor="#1e1f52" />
        </linearGradient>
        <linearGradient id="red" x1="0" y1="0" x2="1" y2="0"><stop offset="0" stopColor="#7a0808" /><stop offset=".5" stopColor="#d01010" /><stop offset="1" stopColor="#c00000" /></linearGradient>
        <radialGradient id="cy" cx=".6" cy=".35" r=".7"><stop offset="0" stopColor="#50f0f0" /><stop offset="1" stopColor="#139a9c" /></radialGradient>
        <radialGradient id="bl" cx=".45" cy=".4" r=".7"><stop offset="0" stopColor="#0a0ab0" /><stop offset="1" stopColor="#00005a" /></radialGradient>
      </defs>
      <path d="M784 333L2052 345L2431 371L2412 1249L768 1210Z" {...line} />
      <path d="M784 333L1161 359L2431 371M768 1210L2036 1222L2412 1249M768 1210L1145 1237L2412 1249" {...line} />
      <path d="M1161 359L1145 1237M2052 345L2036 1222" {...line} />
      <ellipse cx="1291" cy="788" rx="75.5" ry="176" fill="url(#rim)" stroke="#1a0f2a" strokeWidth="1.4" />
      <ellipse cx="1271.5" cy="788" rx="75.5" ry="176" fill="#1e1f4e" stroke="#15081e" strokeWidth="1.6" />
      <path d="M1256 774H1277L1281 786L1277 798H1256Z" fill="#6666ff" stroke="#0a0a30" strokeWidth="1.4" />
      <path d="M2414 1137H2422V1224H2414Z" fill="url(#red)" />
      <path d="M2419 1109L2430 1137H2407Z" fill="#d40808" />
      <path d="M2415 1221H2450V1228H2415Z" fill="#0a0a80" />
      <circle cx="2455" cy="1226" r="11" fill="url(#bl)" />
      <path d="M2343 1220H2415V1227H2343Z" fill="#0c860c" />
      <path d="M2313 1223L2343 1212V1234Z" fill="#0a7a0a" />
      <circle cx="2393" cy="1171" r="11" fill="url(#cy)" />
      <text x="2423" y="1091" textAnchor="middle" fontSize="13" fill="#ff3030" fontFamily="Noto Sans">X</text>
      <text x="2301" y="1223" textAnchor="middle" fontSize="13" fill="#20c020" fontFamily="Noto Sans">Y</text>
      <text x="2477" y="1229" textAnchor="middle" fontSize="13" fill="#3030ff" fontFamily="Noto Sans">Z</text>
    </Scene>
  );
};

const Cap = () => <BarCaret />;
const details: { t: string; v?: string }[] = [
  { t: "Scope" },
  { t: "Scoping Method", v: "Geometry Selection" },
  { t: "Geometry", v: "1 Body" },
  { t: "Definition" },
  { t: "Suppressed", v: "No" },
  { t: "Method", v: "Tetrahedrons" },
  { t: "Algorithm", v: "Patch Conforming" },
  { t: "Element Order", v: "Use Global Setting" },
];

const S: React.FC<{ i: React.ReactNode; off?: boolean; children: React.ReactNode }> = ({ i, off, children }) => (
  <SmallBtn $off={off}><SmallIcon>{i}</SmallIcon>{children}</SmallBtn>
);

export default function App() {
  return (
    <Page>
      <Global />
      <TitleBar>
        <QuickAccess>
          <AppLogo>M</AppLogo>
          <QuickSep />
          <SaveI />
          <QuickGap />
          <QaArrow />
          <ContextTab>Context</ContextTab>
        </QuickAccess>
        <WindowTitle>B: Mesh - Meshing [ANSYS AUTODYN PrepPost]</WindowTitle>
        <WindowControls><Min /><Restore /><CloseW /></WindowControls>
      </TitleBar>
      <TabRow>
        <FileTab>File</FileTab>
        <Tab $w={72} $active>Home</Tab>
        <Tab $w={75}>Mesh</Tab>
        <Tab $w={82}>Display</Tab>
        <Tab $w={96}>Selection</Tab>
        <Tab $w={118}>Automation</Tab>
        <TabSpacer />
        <QuickLaunch>Quick Launch</QuickLaunch>
        <HelpGroup><ChevUp /><CheckBox /><Help /></HelpGroup>
      </TabRow>
      <Ribbon>
        <Group $w={288}>
          <GroupBody>
            <BigBtn $w={81}><Duplicate />Duplicate<DropCaret /></BigBtn>
            <SmallCol $w={63}><S i={<Cut />}>Cut</S><S i={<Copy />}>Copy</S></SmallCol>
            <SmallCol $w={72}><S off i={<Paste />}>Paste</S><S i={<Del />}>Delete</S></SmallCol>
            <SmallCol><S i={<Find />}>Find</S><S i={<TreeI />}>Tree<InlineCaret /></S></SmallCol>
          </GroupBody>
          <GroupLabel $shift={2}>Outline</GroupLabel>
        </Group>
        <Group $w={79}>
          <GroupBody><BigBtn $w={80}><Bolt />Generate</BigBtn></GroupBody>
          <GroupLabel $shift={5}>Mesh</GroupLabel>
        </Group>
        <Group $w={379} $pad={13}>
          <GroupBody>
            <SmallCol $w={153}><S off i={<NamedOff />}>Named Selection</S><S off i={<CoordOff />}>Coordinate System</S></SmallCol>
            <SmallCol $w={95}><S i={<Comment />}>Comment</S><S i={<Camera />}>Images<InlineCaret /></S></SmallCol>
            <SmallCol><S i={<Section />}>Section Plane</S><S i={<Annot />}>Annotation</S></SmallCol>
          </GroupBody>
          <GroupLabel $shift={-7}>Insert</GroupLabel>
        </Group>
        <Group $w={764} $pad={12}>
          <GroupBody>
            <BigBtn $w={44}><Units />Units<DropCaret /></BigBtn>
            <BigBtn $w={86}><Worksheet />Worksheet</BigBtn>
            <BigBtn $w={64}><Film />Keyframe<br />Animation</BigBtn>
            <BodyGap $w={11} />
            <SmallCol $w={107}><S i={<Tag />}>Tags</S><S i={<Errors />}>Show Errors</S></SmallCol>
            <SmallCol $w={172}><S i={<Views />}>Manage Views</S><S i={<InfoI />}>Selection Information</S></SmallCol>
            <SmallCol $w={124}><S i={<Conv />}>Unit Converter</S><S i={<PrintPrev />}>Print Preview</S></SmallCol>
            <SmallCol><S i={<ReportPrev />}>Report Preview</S><S i={<KeyA />}>Key Assignments</S></SmallCol>
          </GroupBody>
          <GroupLabel $shift={-6}>Tools</GroupLabel>
        </Group>
        <Group $w={307}>
          <GroupBody>
            <BigBtn $w={64}><FullScr />Full<br />Screen</BigBtn>
            <BodyGap $w={1} />
            <SmallCol $w={127}><S i={<Org />}>Manage<InlineCaret /></S><S i={<UserDef />}>User Defined<InlineCaret /></S></SmallCol>
            <SmallCol><S i={<Reset />}>Reset Layout</S></SmallCol>
          </GroupBody>
          <GroupLabel $shift={4}>Layout</GroupLabel>
        </Group>
      </Ribbon>
      <Main>
        <LeftPane>
          <PanelHead $active>
            Outline<HeadDots $active />
            <HeadIcons><HArrow /><Pin /><Max /><XI /></HeadIcons>
          </PanelHead>
          <OutlineTools>
            <Grip />
            <NameSelect>Name<HArrow c="#555" /></NameSelect>
            <SearchBox>Search Outline</SearchBox>
            <ChevDown />
            <ToolsGap />
            <DropLow><SmallDrop /></DropLow>
          </OutlineTools>
          <Tree>
            <Connectors />
            {nodes.map(n => (
              <Row key={n.t} $pad={n.pad}>
                {n.check && <CheckSlot>{n.check === "ok" ? <Check /> : <CheckX />}</CheckSlot>}
                <NodeIcon>{n.i}</NodeIcon>
                <NodeLabel $bold={n.bold} $sel={n.sel}>{n.t}</NodeLabel>
              </Row>
            ))}
          </Tree>
          <TreeGap />
          <Details>
            <PanelHead>
              {'Details of "Patch Conforming Method" - Method'}<HeadDots />
              <HeadIcons><HArrow c="#222" /><Pin c="#222" /><Max c="#222" /><XI c="#222" /></HeadIcons>
            </PanelHead>
            <Grid>
              {details.map(d => (
                <DetRow key={d.t}>
                  <DetGutter>{!d.v && <Minus />}</DetGutter>
                  {d.v ? (
                    <><DetCell $w={121}>{d.t}</DetCell><DetCell>{d.v}</DetCell></>
                  ) : (
                    <DetCell $bold>{d.t}</DetCell>
                  )}
                </DetRow>
              ))}
            </Grid>
          </Details>
        </LeftPane>
        <Splitter />
        <RightPane>
          <ToolBar>
            <Grip />
            <Slot $w={7} />
            <Slot $w={28}><ZoomI /></Slot>
            <Slot $w={28}><ZoomI c="#aaa" f="#ccc" /></Slot>
            <ToolSep $w={6} />
            <Slot $w={30}><DarkCube /></Slot>
            <Slot $w={28}><DarkCube c="#aaa" /></Slot>
            <Slot $w={27} $on><Rotate3d /></Slot>
            <Slot $w={8} />
            <Slot $w={27}><Pane /></Slot>
            <ToolSep $w={4} />
            <Slot $w={32}><RotateI /></Slot>
            <Slot $w={12}><Cap /></Slot>
            <Slot $w={27}><PanI /></Slot>
            <Slot $w={28}><ZoomI /></Slot>
            <Slot $w={27}><ZoomI /></Slot>
            <Slot $w={28}><ZoomI f="#6a8ab8" /></Slot>
            <Slot $w={27}><ZoomI f="#6aa080" /></Slot>
            <ToolSep $w={6} />
            <TextSlot $w={52} $pad={8}>Select</TextSlot>
            <Slot $w={25} $end><ModeI /></Slot>
            <TextSlot $w={50} $pad={4}>Mode</TextSlot>
            <Slot $w={9}><Cap /></Slot>
            <ToolSep $w={7} />
            <Slot $w={2} />
            <Slot $w={28} $on><VertexSel /></Slot>
            <Slot $w={27}><BoxSel /></Slot>
            <Slot $w={27}><BoxSel /></Slot>
            <Slot $w={27}><BoxSel /></Slot>
            <Slot $w={27}><BoxSel f="#18d018" c="#222" /></Slot>
            <Slot $w={28}><BoxSel mesh /></Slot>
            <Slot $w={29}><BoxSel mesh f="#a8e0a8" /></Slot>
            <Slot $w={26}><BoxSel mesh f="#30c040" /></Slot>
            <Slot $w={27}><XYZ /></Slot>
            <Slot $w={28}><HundredI /></Slot>
            <ToolSep $w={6} />
            <Slot $w={28}><Clip /></Slot>
            <TextSlot $w={74}>Clipboard</TextSlot>
            <Slot $w={10}><Cap /></Slot>
            <TextSlot $w={80} $pad={14}>[ Empty ]</TextSlot>
            <ToolSep $w={7} />
            <Slot $w={29} $end><ExtendI /></Slot>
            <TextSlot $w={54} $pad={2}>Extend</TextSlot>
            <Slot $w={8}><Cap /></Slot>
            <Slot $w={31} $end><SelectBy /></Slot>
            <TextSlot $w={68} $pad={2}>Select By</TextSlot>
            <Slot $w={10}><Cap /></Slot>
            <Slot $w={33} $end><ConvertI /></Slot>
            <TextSlot $w={60} $pad={2}>Convert</TextSlot>
            <Slot $w={10}><Cap /></Slot>
            <Slot $w={30}><DropLow><SmallDrop /></DropLow></Slot>
          </ToolBar>
          <Viewport>
            <W3D />
            <Caption>
              <CaptionTitle>Patch Conforming Method</CaptionTitle>
              <div>2024/3/19 17:24</div>
              <Legend><Swatch />Patch Conforming Method</Legend>
            </Caption>
            <Brand>
              <BrandName>ANSYS</BrandName>
              <BrandVer>2020 <b>R2</b></BrandVer>
            </Brand>
            <ScaleBar>
              <ScaleTick $col={1}>0.000</ScaleTick>
              <ScaleTick $col={3}>15.000</ScaleTick>
              <ScaleTick $col={4} $end>30.000 (m)</ScaleTick>
              <ScaleSeg $dark /><ScaleSeg /><ScaleSeg $dark /><ScaleSeg />
              <ScaleGap />
              <ScaleTick $col={2}>7.500</ScaleTick>
              <ScaleTick $col={4}>22.500</ScaleTick>
            </ScaleBar>
          </Viewport>
        </RightPane>
      </Main>
      <StatusBar>
        <StatusItem $w={144}><Msg />No Messages</StatusItem>
        <StatusItem $w={125}>No Selection</StatusItem>
        <StatusItem $w={210}><UpCaret />Metric (m, kg, N, s, V, A)</StatusItem>
        <StatusItem $w={82}>Degrees</StatusItem>
        <StatusItem $w={58}>rad/s</StatusItem>
        <StatusItem $w={53}>Celsius</StatusItem>
      </StatusBar>
    </Page>
  );
}
